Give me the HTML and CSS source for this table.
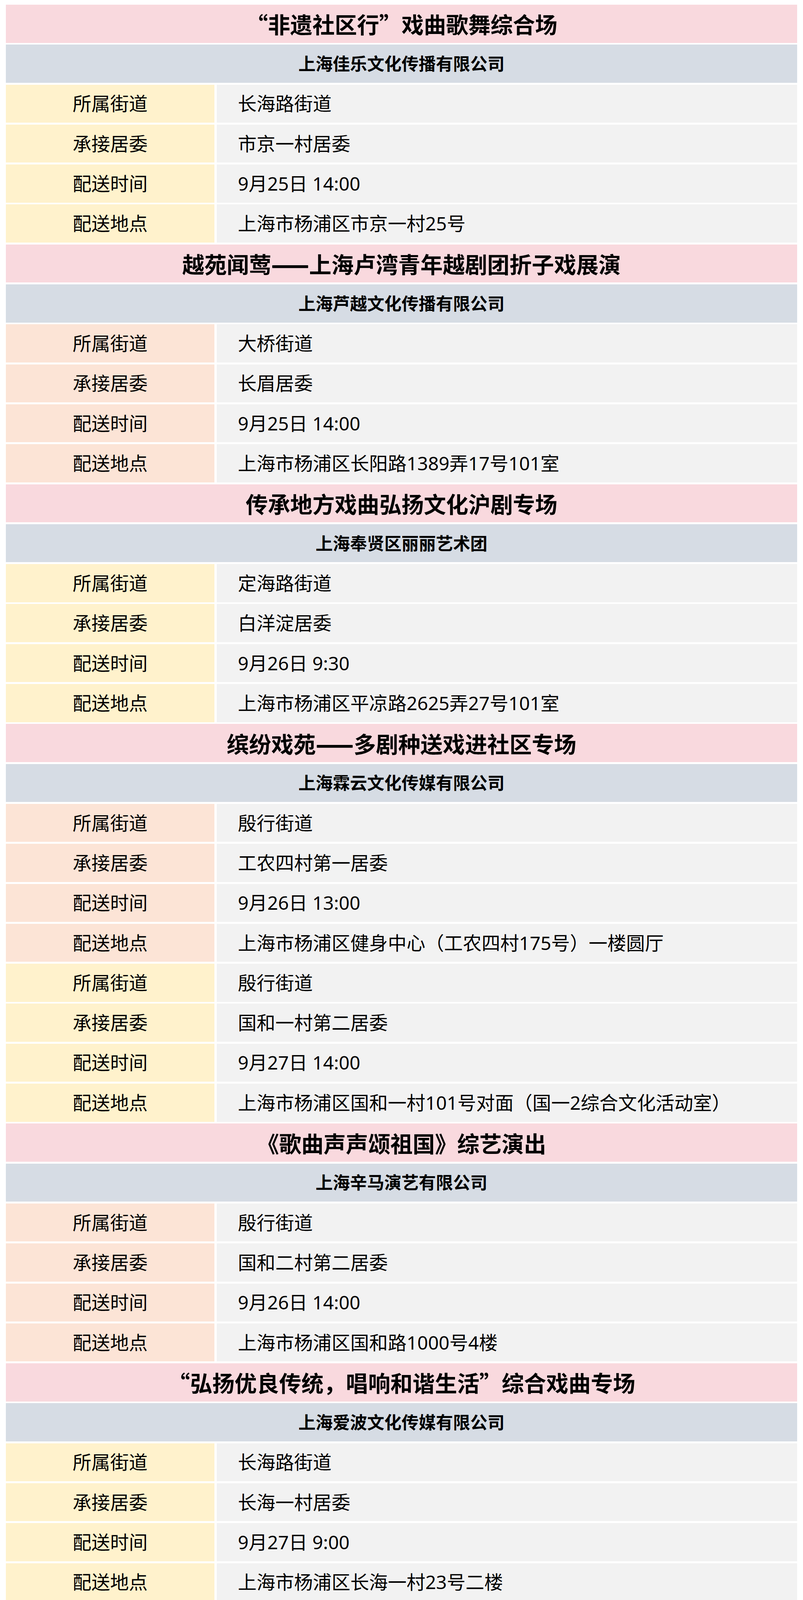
FILE: index.html
```html
<!DOCTYPE html>
<html lang="zh-CN">
<head>
<meta charset="utf-8">
<title>配送信息</title>
<link rel="stylesheet" href="styles.css">
</head>
<body>
<div class="sheet">
  <div class="title">“非遗社区行”戏曲歌舞综合场</div>
  <div class="company">上海佳乐文化传播有限公司</div>
  <div class="label yellow">所属街道</div><div class="value">长海路街道</div>
  <div class="label yellow">承接居委</div><div class="value">市京一村居委</div>
  <div class="label yellow">配送时间</div><div class="value">9月25日 14:00</div>
  <div class="label yellow">配送地点</div><div class="value">上海市杨浦区市京一村25号</div>

  <div class="title">越苑闻莺<span class="dash">——</span>上海卢湾青年越剧团折子戏展演</div>
  <div class="company">上海芦越文化传播有限公司</div>
  <div class="label peach">所属街道</div><div class="value">大桥街道</div>
  <div class="label peach">承接居委</div><div class="value">长眉居委</div>
  <div class="label peach">配送时间</div><div class="value">9月25日 14:00</div>
  <div class="label peach">配送地点</div><div class="value">上海市杨浦区长阳路1389弄17号101室</div>

  <div class="title">传承地方戏曲弘扬文化沪剧专场</div>
  <div class="company">上海奉贤区丽丽艺术团</div>
  <div class="label yellow">所属街道</div><div class="value">定海路街道</div>
  <div class="label yellow">承接居委</div><div class="value">白洋淀居委</div>
  <div class="label yellow">配送时间</div><div class="value">9月26日 9:30</div>
  <div class="label yellow">配送地点</div><div class="value">上海市杨浦区平凉路2625弄27号101室</div>

  <div class="title">缤纷戏苑<span class="dash">——</span>多剧种送戏进社区专场</div>
  <div class="company">上海霖云文化传媒有限公司</div>
  <div class="label peach">所属街道</div><div class="value">殷行街道</div>
  <div class="label peach">承接居委</div><div class="value">工农四村第一居委</div>
  <div class="label peach">配送时间</div><div class="value">9月26日 13:00</div>
  <div class="label peach">配送地点</div><div class="value">上海市杨浦区健身中心（工农四村175号）一楼圆厅</div>
  <div class="label yellow">所属街道</div><div class="value">殷行街道</div>
  <div class="label yellow">承接居委</div><div class="value">国和一村第二居委</div>
  <div class="label yellow">配送时间</div><div class="value">9月27日 14:00</div>
  <div class="label yellow">配送地点</div><div class="value">上海市杨浦区国和一村101号对面（国一2综合文化活动室）</div>

  <div class="title">《歌曲声声颂祖国》综艺演出</div>
  <div class="company">上海辛马演艺有限公司</div>
  <div class="label peach">所属街道</div><div class="value">殷行街道</div>
  <div class="label peach">承接居委</div><div class="value">国和二村第二居委</div>
  <div class="label peach">配送时间</div><div class="value">9月26日 14:00</div>
  <div class="label peach">配送地点</div><div class="value">上海市杨浦区国和路1000号4楼</div>

  <div class="title">“弘扬优良传统，唱响和谐生活”综合戏曲专场</div>
  <div class="company">上海爱波文化传媒有限公司</div>
  <div class="label yellow">所属街道</div><div class="value">长海路街道</div>
  <div class="label yellow">承接居委</div><div class="value">长海一村居委</div>
  <div class="label yellow">配送时间</div><div class="value">9月27日 9:00</div>
  <div class="label yellow">配送地点</div><div class="value">上海市杨浦区长海一村23号二楼</div>
</div>
</body>
</html>
```

FILE: styles.css
```css
html, body {
  margin: 0;
  padding: 0;
  background: #ffffff;
}

body {
  font-family: "Noto Sans", "Noto Sans CJK SC", sans-serif;
  color: #000000;
}

.sheet {
  display: grid;
  grid-template-columns: 534px 1fr;
  grid-auto-rows: 97.5px;
  row-gap: 4.8px;
  column-gap: 6px;
  padding: 12px 15px;
}

.title,
.company,
.label,
.value {
  display: flex;
  align-items: center;
  white-space: nowrap;
  line-height: 1;
  overflow: hidden;
}

.title {
  grid-column: 1 / -1;
  justify-content: center;
  background: #f9d9de;
  font-family: "Noto Sans CJK SC", "Noto Sans", sans-serif;
  font-size: 57px;
  font-weight: 700;
}

.dash {
  text-shadow: 0 1px 0 currentColor, 0 -1px 0 currentColor;
}

.company {
  grid-column: 1 / -1;
  justify-content: center;
  background: #d6dce4;
  font-size: 44px;
  font-weight: 700;
}

.label {
  justify-content: center;
  font-size: 48px;
}

.yellow {
  background: #fff2cc;
}

.peach {
  background: #fce4d6;
}

.value {
  background: #f2f2f2;
  font-size: 48px;
  padding-left: 54px;
}
```
